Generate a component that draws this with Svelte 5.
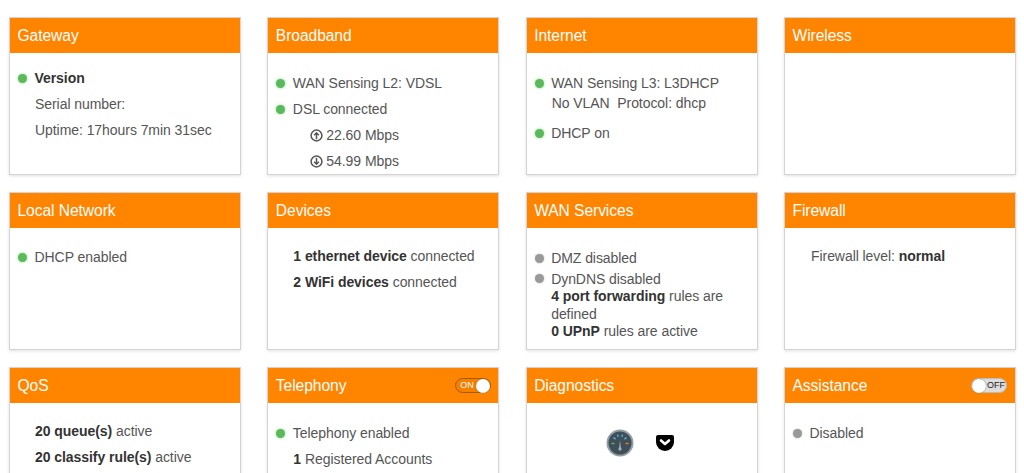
<script>
  const up = "M6 9.5V3.5M3.8 5.7 6 3.5l2.2 2.2";
  const down = "M6 2.5v6M3.8 6.3 6 8.5l2.2-2.2";
</script>

<main class="grid">
  <section class="card">
    <h3>Gateway</h3>
    <div class="body">
      <p class="row r1"><i class="dot green"></i><b>Version</b></p>
      <p class="plain">Serial number:</p>
      <p class="plain">Uptime: 17hours 7min 31sec</p>
    </div>
  </section>

  <section class="card">
    <h3>Broadband</h3>
    <div class="body">
      <p class="row r2"><i class="dot green"></i>WAN Sensing L2: VDSL</p>
      <p class="row"><i class="dot green"></i>DSL connected</p>
      <p class="rate">
        <svg viewBox="0 0 12 12" width="13" height="13"><circle cx="6" cy="6" r="5" /><path d={up} /></svg>
        22.60 Mbps
      </p>
      <p class="rate">
        <svg viewBox="0 0 12 12" width="13" height="13"><circle cx="6" cy="6" r="5" /><path d={down} /></svg>
        54.99 Mbps
      </p>
    </div>
  </section>

  <section class="card">
    <h3>Internet</h3>
    <div class="body">
      <p class="row r3"><i class="dot green"></i>WAN Sensing L3: L3DHCP</p>
      <p class="vlan">No VLAN&nbsp; Protocol: dhcp</p>
      <p class="row dhcp"><i class="dot green"></i>DHCP on</p>
    </div>
  </section>

  <section class="card">
    <h3>Wireless</h3>
    <div class="body"></div>
  </section>

  <section class="card">
    <h3>Local Network</h3>
    <div class="body">
      <p class="row r4"><i class="dot green"></i>DHCP enabled</p>
    </div>
  </section>

  <section class="card">
    <h3>Devices</h3>
    <div class="body">
      <p class="count first"><b>1 ethernet device</b> connected</p>
      <p class="count"><b>2 WiFi devices</b> connected</p>
    </div>
  </section>

  <section class="card">
    <h3>WAN Services</h3>
    <div class="body">
      <p class="row r2"><i class="dot grey"></i>DMZ disabled</p>
      <div class="wan">
        <i class="dot grey"></i>
        <div>
          DynDNS disabled<br />
          <b>4 port forwarding</b> rules are defined<br />
          <b>0 UPnP</b> rules are active
        </div>
      </div>
    </div>
  </section>

  <section class="card">
    <h3>Firewall</h3>
    <div class="body">
      <p class="fw">Firewall level: <b>normal</b></p>
    </div>
  </section>

  <section class="card">
    <h3>QoS</h3>
    <div class="body">
      <p class="count qos first"><b>20 queue(s)</b> active</p>
      <p class="count qos"><b>20 classify rule(s)</b> active</p>
    </div>
  </section>

  <section class="card">
    <h3>Telephony <span class="switch on"><span class="lbl">ON</span><span class="knob"></span></span></h3>
    <div class="body">
      <p class="row r2"><i class="dot green"></i>Telephony enabled</p>
      <p class="plain tel"><b>1</b> Registered Accounts</p>
    </div>
  </section>

  <section class="card">
    <h3>Diagnostics</h3>
    <div class="body icons">
      <svg class="gauge" viewBox="0 0 28 28" width="28" height="28">
        <circle cx="14" cy="14" r="13.5" fill="#939da2" />
        <circle cx="14" cy="14" r="11.5" fill="#3f4f59" />
        <path d="M5.5 14.5h3" stroke="#5cb85c" stroke-width="1.4" />
        <path d="M7.5 8.5l2 1.6M11.5 5.6l.7 2.2M16.5 5.6l-.7 2.2M20.5 8.5l-2 1.6" stroke="#52b9e0" stroke-width="1.4" />
        <path d="M19.5 14.5h3" stroke="#ef7b22" stroke-width="1.4" />
        <path d="M13.3 20l.7-9 .7 9z" fill="#d5dadd" />
        <circle cx="14" cy="20" r="1.6" fill="#aab2b6" />
      </svg>
      <svg class="pocket" viewBox="0 0 18 16" width="18" height="16">
        <path d="M2 0h14a2 2 0 0 1 2 2v5a9 9 0 0 1-18 0V2a2 2 0 0 1 2-2z" fill="#000" />
        <path d="M5 5.5 9 9l4-3.5" fill="none" stroke="#fff" stroke-width="2.6" stroke-linecap="round" stroke-linejoin="round" />
      </svg>
    </div>
  </section>

  <section class="card">
    <h3>Assistance <span class="switch off"><span class="knob"></span><span class="lbl">OFF</span></span></h3>
    <div class="body">
      <p class="row r2"><i class="dot grey"></i>Disabled</p>
    </div>
  </section>
</main>

<style>
  :global(body) {
    background: #fff;
    overflow: hidden;
  }

  .grid {
    display: grid;
    grid-template-columns: repeat(4, 232px);
    grid-auto-rows: 158px;
    column-gap: 26.33px;
    row-gap: 17px;
    padding: 17px 0 0 9px;
    font-family: "Liberation Sans", Arial, sans-serif;
    font-size: 14px;
    line-height: 20px;
    letter-spacing: -0.06px;
    color: #555;
  }

  .card {
    box-sizing: border-box;
    background: #fff;
    border: 1px solid #d4d4d4;
    box-shadow: 0 1px 3px rgba(0, 0, 0, 0.12);
    overflow: hidden;
  }

  h3 {
    display: flex;
    justify-content: space-between;
    align-items: center;
    box-sizing: border-box;
    height: 35px;
    margin: 0;
    padding: 0 7px 0 7.5px;
    background: #ff8400;
    color: #fff;
    font-size: 15.6px;
    line-height: 20px;
    font-weight: normal;
  }

  .body {
    padding: 0 8px;
  }

  p {
    margin: 0;
  }

  b {
    color: #333;
  }

  .row {
    display: flex;
    align-items: center;
  }

  .r1 { margin-top: 15px; }
  .r2 { margin-top: 20px; margin-bottom: 6px; }
  .r3 { margin-top: 20px; }
  .r4 { margin-top: 19px; }

  .dot {
    flex: none;
    width: 9px;
    height: 9px;
    margin-right: 7.5px;
    border-radius: 50%;
  }

  .green {
    background: #5cb85c;
    box-shadow: 0 0 3px #7fe07f;
  }

  .grey {
    background: #999;
    box-shadow: 0 0 2px #bbb;
  }

  .plain {
    margin-top: 6px;
    padding-left: 17px;
  }

  .rate {
    display: flex;
    align-items: center;
    gap: 3px;
    margin-top: 6px;
    padding-left: 34px;
  }

  .rate svg {
    fill: none;
    stroke: #555;
    stroke-width: 1.4;
  }

  .vlan {
    padding-left: 17px;
  }

  .dhcp {
    margin-top: 10px;
  }

  .count {
    margin-top: 6px;
    padding-left: 17px;
  }

  .count.first {
    margin-top: 18px;
  }

  .wan {
    display: flex;
    margin-top: -3px;
    line-height: 17.4px;
  }

  .wan .dot {
    margin-top: 3px;
  }

  .fw {
    margin-top: 18px;
    padding-left: 18px;
  }

  .icons {
    display: flex;
    align-items: center;
    padding: 26px 0 0 79px;
    gap: 22px;
  }

  .switch {
    display: flex;
    align-items: center;
    box-sizing: border-box;
    width: 36px;
    height: 15px;
    border-radius: 8px;
    font-size: 9px;
    line-height: 13px;
    letter-spacing: 0;
  }

  .switch.on {
    justify-content: space-between;
    background: #f58000;
    border: 1px solid #a85a00;
    color: #fff;
    padding-left: 4px;
  }

  .switch.off {
    gap: 1px;
    margin-right: 1px;
    background: #ddd;
    border: 1px solid #bbb;
    color: #222;
  }

  .knob {
    flex: none;
    width: 14px;
    height: 14px;
    border-radius: 50%;
    background: #fff;
    box-shadow: 0 0 1px #555;
  }
</style>
